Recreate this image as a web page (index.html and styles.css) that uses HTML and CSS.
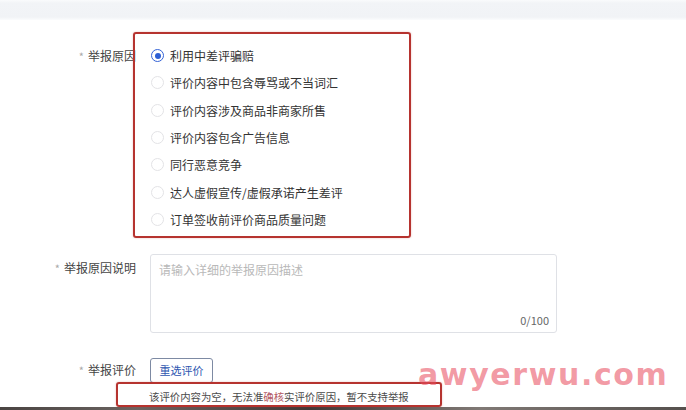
FILE: index.html
```html
<!DOCTYPE html>
<html lang="zh-CN">
<head>
<meta charset="utf-8">
<title>举报</title>
<link rel="stylesheet" href="styles.css">
</head>
<body>
<div class="topbar"></div>
<main class="page">
  <div class="form">
    <div class="row row-reason">
      <div class="label"><span class="req">*</span>举报原因</div>
      <div class="control radios">
        <label class="radio checked"><span class="dot"></span>利用中差评骗赔</label>
        <label class="radio"><span class="dot"></span>评价内容中包含辱骂或不当词汇</label>
        <label class="radio"><span class="dot"></span>评价内容涉及商品非商家所售</label>
        <label class="radio"><span class="dot"></span>评价内容包含广告信息</label>
        <label class="radio"><span class="dot"></span>同行恶意竞争</label>
        <label class="radio"><span class="dot"></span>达人虚假宣传/虚假承诺产生差评</label>
        <label class="radio"><span class="dot"></span>订单签收前评价商品质量问题</label>
      </div>
    </div>
    <div class="row row-desc">
      <div class="label"><span class="req">*</span>举报原因说明</div>
      <div class="control">
        <div class="textarea">
          <span class="placeholder">请输入详细的举报原因描述</span>
          <span class="count">0/100</span>
        </div>
      </div>
    </div>
    <div class="row row-review">
      <div class="label"><span class="req">*</span>举报评价</div>
      <div class="control">
        <button class="btn">重选评价</button>
      </div>
    </div>
    <div class="row row-tip">
      <div></div>
      <div class="control tip">该评价内容为空，无法准<span class="hl">确核</span>实评价原因，暂不支持举报</div>
    </div>
  </div>
  <div class="mark mark-reasons"></div>
  <div class="mark mark-tip"></div>
  <div class="watermark">awyerwu.com</div>
</main>
<div class="bottom-strip"></div>
</body>
</html>
```

FILE: styles.css
```css
* { box-sizing: border-box; }
html, body { margin: 0; padding: 0; }
body {
  width: 686px;
  height: 410px;
  overflow: hidden;
  display: flex;
  flex-direction: column;
  background: #fff;
  font-family: "Noto Sans CJK SC", "Noto Sans", sans-serif;
  font-size: 12px;
  color: #333;
}
.topbar {
  height: 20px;
  flex: none;
  background: linear-gradient(#fafbfc 0, #f2f4f7 3px, #f1f3f6 17px, #fbfcfd 20px);
}
.page {
  position: relative;
  flex: 1;
}
.form {
  padding-top: 22px;
  display: flex;
  flex-direction: column;
}
.row {
  display: grid;
  grid-template-columns: 136px 407px;
  column-gap: 14px;
}
.label {
  text-align: right;
  color: #444;
  font-size: 12px;
  line-height: 27.3px;
  white-space: nowrap;
}
.req {
  color: #a9a9a9;
  margin-right: 4px;
  font-size: 11px;
}
.radios {
  display: flex;
  flex-direction: column;
}
.radio {
  display: flex;
  align-items: center;
  height: 27.33px;
  color: #333;
  white-space: nowrap;
}
.dot {
  width: 13px;
  height: 13px;
  border-radius: 50%;
  border: 1px solid #e3e3e6;
  margin-left: 1px;
  margin-right: 6px;
  flex: none;
  position: relative;
  background: #fff;
}
.radio.checked .dot {
  border: 1.5px solid #3463d6;
}
.radio.checked .dot::after {
  content: "";
  position: absolute;
  left: 50%;
  top: 50%;
  width: 6px;
  height: 6px;
  margin: -3px 0 0 -3px;
  border-radius: 50%;
  background: #2d5fd4;
}
.row-desc { margin-top: 21px; }
.row-desc .label { line-height: 28px; }
.textarea {
  position: relative;
  height: 79px;
  border: 1px solid #dfe1e6;
  border-radius: 3px;
  padding: 6px 8px;
}
.placeholder {
  color: #b9b9b9;
  font-size: 12px;
  line-height: 18px;
}
.count {
  position: absolute;
  right: 7px;
  bottom: 4px;
  font-size: 11px;
  color: #666;
}
.row-review {
  margin-top: 23px;
  align-items: center;
}
.btn {
  width: 63px;
  height: 25px;
  padding: 0;
  border: 1px solid #7d8aa3;
  border-radius: 3px;
  background: #fff;
  color: #2d55b0;
  font-family: inherit;
  font-size: 11px;
}
.row-tip { margin-top: 2px; }
.tip {
  margin-left: -1px;
  font-size: 10.4px;
  line-height: 20px;
  color: #4a4a4a;
  white-space: nowrap;
}
.hl { color: #b45a64; }
.mark {
  position: absolute;
  border: 2px solid #b6332f;
  border-radius: 3px;
  box-shadow: 0 0 2px rgba(182, 51, 47, 0.35);
  pointer-events: none;
}
.mark-reasons {
  left: 133px;
  top: 12px;
  width: 278px;
  height: 206px;
}
.mark-tip {
  left: 116px;
  top: 362px;
  width: 326px;
  height: 25px;
}
.watermark {
  position: absolute;
  left: 418px;
  top: 340px;
  font-family: "DejaVu Sans", sans-serif;
  font-weight: bold;
  font-size: 30px;
  line-height: 1;
  letter-spacing: 1.6px;
  color: rgba(232, 78, 95, 0.58);
  white-space: nowrap;
  pointer-events: none;
}
.bottom-strip {
  height: 3px;
  flex: none;
  background: linear-gradient(90deg, #4a4442, #6b6461 20%, #3e3937 45%, #807975 70%, #55504d);
}
```
